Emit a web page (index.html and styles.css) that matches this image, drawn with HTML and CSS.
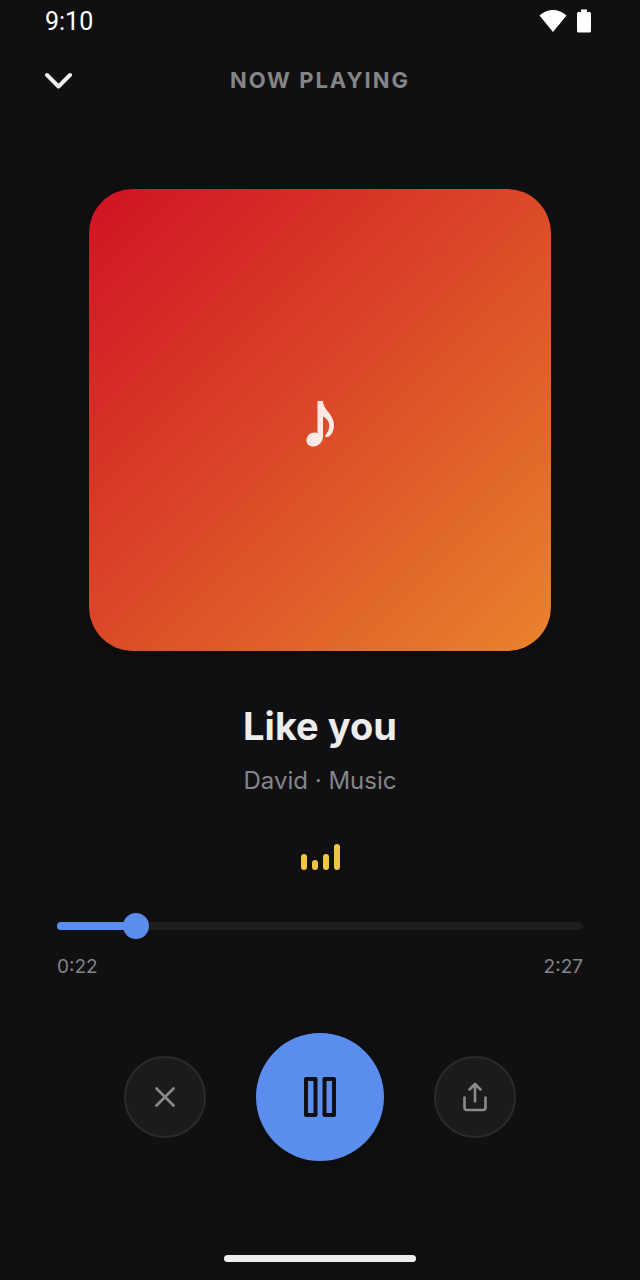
FILE: index.html
```html
<!DOCTYPE html>
<html lang="en">
<head>
  <meta charset="UTF-8">
  <meta name="viewport" content="width=device-width, initial-scale=1.0">
  <title>Now Playing</title>
  <link rel="stylesheet" href="styles.css">
</head>
<body>
  <div class="status-bar">
    <span class="clock">9:10</span>
    <div class="status-icons">
      <svg width="28" height="24" viewBox="0 0 28 24" fill="#fff"><path d="M14 23 L0.5 6.5 C8 -1 20 -1 27.5 6.5 Z"/></svg>
      <svg width="14" height="24" viewBox="0 0 14 24" fill="#fff"><path d="M4 0.5h6v2.500h2.500a1.500 1.500 0 0 1 1.500 1.500v17.500a1.500 1.500 0 0 1-1.500 1.500h-11a1.500 1.500 0 0 1-1.500-1.500v-17.500a1.500 1.500 0 0 1 1.500-1.500h2.500z"/></svg>
    </div>
  </div>

  <header class="header">
    <button type="button" class="close-button" aria-label="Close player">
      <svg width="28" height="20" viewBox="0 0 28 20" fill="none" stroke="#ededef" stroke-width="4" stroke-linecap="round" stroke-linejoin="round"><path d="M3 5 L14.500 16.500 L26 5"/></svg>
    </button>
    <h1>NOW PLAYING</h1>
  </header>

  <main class="player">
    <div class="cover">
      <svg width="28" height="56" viewBox="0 0 28 56" fill="#fdeae5"><path d="M11.500 9H17C17 18 28 22 28 33C28 39 25 44.500 21.500 45C19.500 45.300 18.500 44.500 19.200 43.500C22 40.500 24 36 23 31.500C22 27.500 19.500 25.500 17 24.500V44C17 50 12.500 54.500 7.500 54.500C3 54.500 0.500 52 0.500 48.500C0.500 44 4 40.500 8.500 40.500C9.600 40.500 10.600 40.700 11.500 41Z"/></svg>
    </div>

    <h2>Like you</h2>
    <p class="artist">David · Music</p>

    <div class="equalizer">
      <span class="bar medium"></span>
      <span class="bar short"></span>
      <span class="bar medium"></span>
      <span class="bar tall"></span>
    </div>

    <div class="seek">
      <div class="seek-track"><div class="seek-fill" style="width: 15%"></div></div>
      <input type="range" min="0" max="147" value="22" aria-label="Playback position">
    </div>
    <div class="times">
      <span>0:22</span>
      <span>2:27</span>
    </div>

    <div class="controls">
      <button type="button" class="side-button" aria-label="Stop">
        <svg width="20" height="20" viewBox="0 0 20 20" fill="none" stroke="#8b8b8e" stroke-width="2.600" stroke-linecap="round"><path d="M1.500 1.500 L18.500 18.500 M18.500 1.500 L1.500 18.500"/></svg>
      </button>
      <button type="button" class="pause-button" aria-label="Pause">
        <svg width="32" height="40" viewBox="0 0 32 40" fill="none" stroke="#101012" stroke-width="4" stroke-linejoin="round"><rect x="2" y="2" width="9.500" height="36"/><rect x="20.500" y="2" width="9.500" height="36"/></svg>
      </button>
      <button type="button" class="side-button" aria-label="Share">
        <svg width="24" height="30" viewBox="0 0 24 30" fill="none" stroke="#8b8b8e" stroke-width="2.600" stroke-linecap="round" stroke-linejoin="round"><path d="M1.500 15.500v10a2.500 2.500 0 0 0 2.500 2.500h16a2.500 2.500 0 0 0 2.500-2.500v-10 M12 19.500V2 M6.500 7.500 L12 2 L17.500 7.500"/></svg>
      </button>
    </div>
  </main>

  <div class="home-bar"></div>
</body>
</html>
```
FILE: styles.css
```css
* {
  box-sizing: border-box;
}

body {
  display: flex;
  flex-direction: column;
  min-height: 100vh;
  margin: 0;
  background: #101012;
  color: #ededef;
  font-family: Inter, "Liberation Sans", sans-serif;
}

button {
  display: flex;
  align-items: center;
  justify-content: center;
  padding: 0;
  border: none;
  background: none;
  cursor: pointer;
}

h1,
h2,
p {
  margin: 0;
}

/* status bar */
.status-bar {
  display: flex;
  align-items: center;
  justify-content: space-between;
  height: 42px;
  padding: 0 49px 0 45px;
}

.clock {
  color: #fff;
  font-family: Roboto, sans-serif;
  font-size: 25px;
}

.status-icons {
  display: flex;
  gap: 10px;
}

/* header */
.header {
  display: grid;
  grid-template-columns: 28px 1fr 28px;
  align-items: center;
  height: 76px;
  padding: 0 44px;
}

.header h1 {
  color: #858588;
  font-size: 22px;
  font-weight: 700;
  letter-spacing: 2px;
  text-align: center;
}

/* player */
.player {
  display: flex;
  flex-direction: column;
  flex: 1;
  padding: 71px 57px 0;
}

.cover {
  display: flex;
  align-items: center;
  justify-content: center;
  align-self: center;
  width: 100%;
  max-width: 462px;
  aspect-ratio: 1;
  border-radius: 44px;
  background: linear-gradient(135deg, #d01224 0%, #db4a28 50%, #e9842c 100%);
  box-shadow: 0 4px 12px rgba(0, 0, 0, 0.3);
}

.player h2 {
  margin-top: 50px;
  font-size: 38px;
  font-weight: 700;
  line-height: 50px;
  text-align: center;
}

.artist {
  margin-top: 14px;
  color: #858588;
  font-size: 24px;
  line-height: 32px;
  text-align: center;
}

.equalizer {
  display: flex;
  align-items: flex-end;
  justify-content: center;
  gap: 5px;
  height: 26px;
  margin-top: 47px;
}

.bar {
  width: 6px;
  border-radius: 3px;
  background: #f0c544;
}

.short {
  height: 10px;
}

.medium {
  height: 16px;
}

.tall {
  height: 26px;
}

/* seek bar */
.seek {
  position: relative;
  display: flex;
  align-items: center;
  height: 26px;
  margin-top: 43px;
}

.seek-track {
  width: 100%;
  height: 8px;
  border-radius: 4px;
  background: #1d1d1f;
}

.seek-fill {
  height: 100%;
  border-radius: 4px;
  background: #5b8def;
}

/* half a thumb wider on both sides, so the thumb sits on the end of the fill */
.seek input {
  position: absolute;
  top: 0;
  left: -13px;
  width: calc(100% + 26px);
  height: 26px;
  margin: 0;
  background: none;
  appearance: none;
  cursor: pointer;
}

.seek input::-webkit-slider-thumb {
  width: 26px;
  height: 26px;
  border-radius: 50%;
  background: #5b8def;
  appearance: none;
}

.times {
  display: flex;
  justify-content: space-between;
  margin-top: 16px;
  color: #858588;
  font-size: 19px;
  line-height: 24px;
}

/* controls */
.controls {
  display: flex;
  align-items: center;
  justify-content: center;
  gap: 50px;
  margin-top: 54px;
}

.side-button {
  width: 82px;
  height: 82px;
  border: 2px solid #2b2b2d;
  border-radius: 50%;
  background: #1b1b1d;
}

.pause-button {
  width: 128px;
  height: 128px;
  border-radius: 50%;
  background: #5b8def;
  box-shadow: 0 4px 12px rgba(0, 0, 0, 0.3);
}

.home-bar {
  align-self: center;
  width: 30%;
  height: 7px;
  margin-bottom: 18px;
  border-radius: 4px;
  background: #ededed;
}
```
